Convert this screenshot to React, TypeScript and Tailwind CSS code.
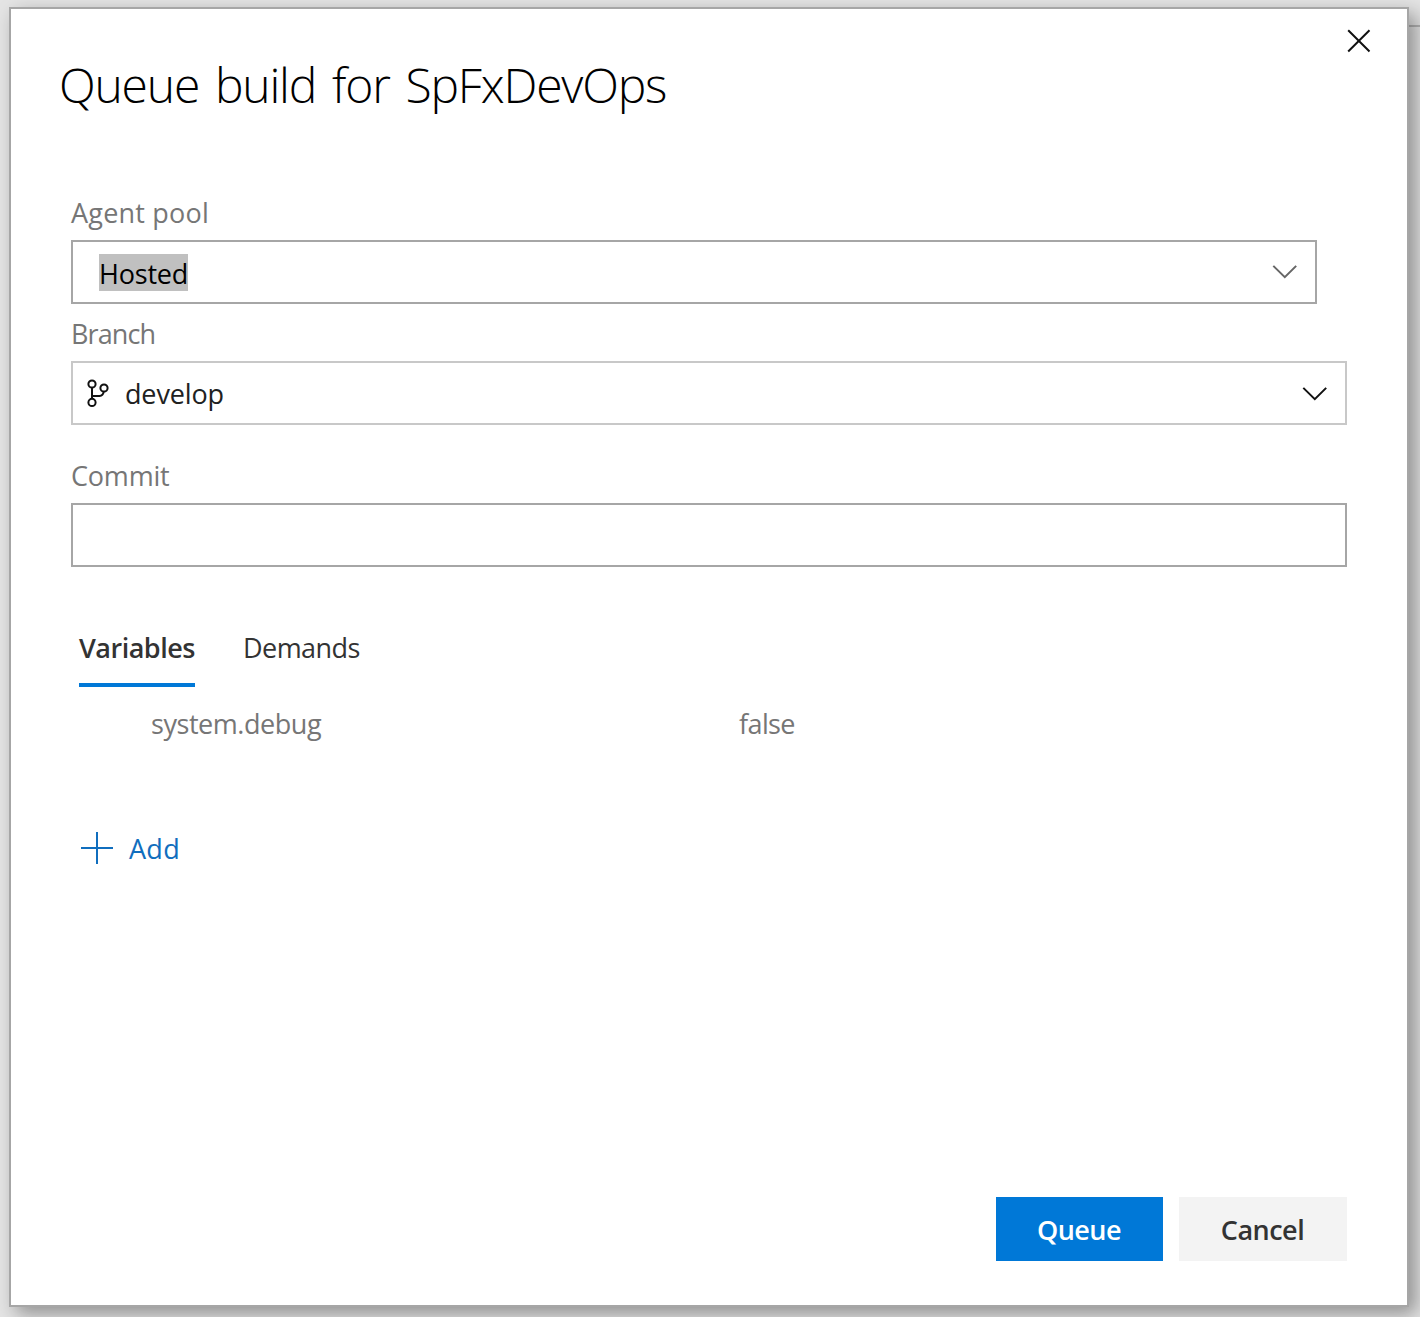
import React from "react";

function Chevron({ className }: { className: string }) {
  return (
    <svg width="26" height="16" viewBox="0 0 26 16" fill="none" className={className}>
      <path d="M1.3 1.9 L12.8 13.2 L24.2 1.9" stroke="currentColor" strokeWidth="2" />
    </svg>
  );
}

function BranchIcon() {
  return (
    <svg width="24" height="30" viewBox="0 0 24 30" fill="none" stroke="#111" strokeWidth="2" className="mt-[2px]">
      <circle cx="6" cy="5" r="3.6" />
      <circle cx="6" cy="23.4" r="3.6" />
      <circle cx="18" cy="9" r="3.6" />
      <path d="M6 8.6V19.8M6 17H13.5Q17 16.6 17.8 12.6" />
    </svg>
  );
}

function Label({ children, className }: { children: React.ReactNode; className: string }) {
  return <label className={`block h-9 leading-9 whitespace-nowrap text-[#767676] ${className}`}>{children}</label>;
}

export default function App() {
  return (
    <div className="relative h-[1317px] w-[1420px] overflow-hidden bg-[#e4e4e4] pt-[7px] pl-[9px] font-['Open_Sans',sans-serif] text-[27px]">
      <div className="absolute top-[25px] right-0 h-[2px] w-[11px] bg-[#b4b4b4]" />
      <div
        role="dialog"
        className="relative flex h-[1300px] w-[1400px] flex-col border-2 border-[#a6a6a6] bg-white pr-[60px] pl-[60px] shadow-[7px_7px_18px_rgba(0,0,0,0.37)]"
      >
        <button aria-label="Close" className="absolute top-[20px] right-[36px]">
          <svg width="24" height="24" viewBox="0 0 24 24" fill="none" stroke="#111" strokeWidth="2">
            <path d="M1.2 1.2 L22.5 22.5 M22.5 1.2 L1.2 22.5" />
          </svg>
        </button>
        <h1 className="mt-[40px] -ml-[12px] h-[72px] text-[48px] leading-[72px] font-light tracking-[-1.2px] whitespace-nowrap text-black [word-spacing:4.6px]">
          <span>Queue build for SpFxDevOps</span>
        </h1>

        <Label className="mt-[74px] tracking-[0.2px]">Agent pool</Label>
        <div className="mt-[9px] flex h-16 w-[1246px] items-center justify-between border-2 border-[#a6a6a6] pr-[17px] pl-[26px]">
          <span className="h-[37px] w-[89px] bg-[#c0c0c0] leading-[40px] tracking-[-0.2px] text-black">Hosted</span>
          <Chevron className="text-[#666]" />
        </div>

        <Label className="mt-[12px] tracking-[-0.9px]">Branch</Label>
        <div className="mt-[9px] flex h-16 w-[1276px] items-center border-2 border-[#c8c8c8] pr-[17px] pl-[13px]">
          <BranchIcon />
          <span className="mt-[2px] ml-[15px] leading-9 tracking-[-0.15px] text-[#212121]">develop</span>
          <Chevron className="mt-[2px] ml-auto text-[#111]" />
        </div>

        <Label className="mt-[33px] tracking-[-0.2px]">Commit</Label>
        <input aria-label="Commit" className="mt-[9px] h-16 w-[1276px] shrink-0 border-2 border-[#a6a6a6] px-3 outline-none" />

        <div role="tablist" className="mt-[63px] ml-[8px] flex h-[57px] gap-[48px] text-[#333]">
          <div role="tab" className="w-[116px] border-b-4 border-[#0078d7] leading-9 font-semibold tracking-[-0.5px]">
            <span>Variables</span>
          </div>
          <div role="tab" className="leading-9 tracking-[-0.55px]">
            <span>Demands</span>
          </div>
        </div>

        <div className="mt-[19px] ml-[80px] flex h-9 leading-9 text-[#767676]">
          <div className="w-[588px] tracking-[-0.45px]">
            <span>system.debug</span>
          </div>
          <span className="tracking-[-0.6px]">false</span>
        </div>

        <button className="mt-[89px] ml-[10px] flex h-9 items-center gap-[16px] leading-9 text-[#106ebe]">
          <svg width="32" height="32" viewBox="0 0 32 32" fill="none" stroke="currentColor" strokeWidth="2" className="-mt-[2px]">
            <path d="M0 16H32M16 0V32" />
          </svg>
          <span className="tracking-[0.3px]">Add</span>
        </button>

        <div className="mt-auto mb-[44px] flex h-16 w-[1276px] justify-end gap-4 font-semibold">
          <button className="w-[167px] bg-[#0078d7] pt-[2px] pr-[1px] tracking-[-0.5px] text-white">Queue</button>
          <button className="w-[168px] bg-[#f3f3f3] pt-[2px] pr-[1px] tracking-[-0.5px] text-[#333]">Cancel</button>
        </div>
      </div>
    </div>
  );
}
